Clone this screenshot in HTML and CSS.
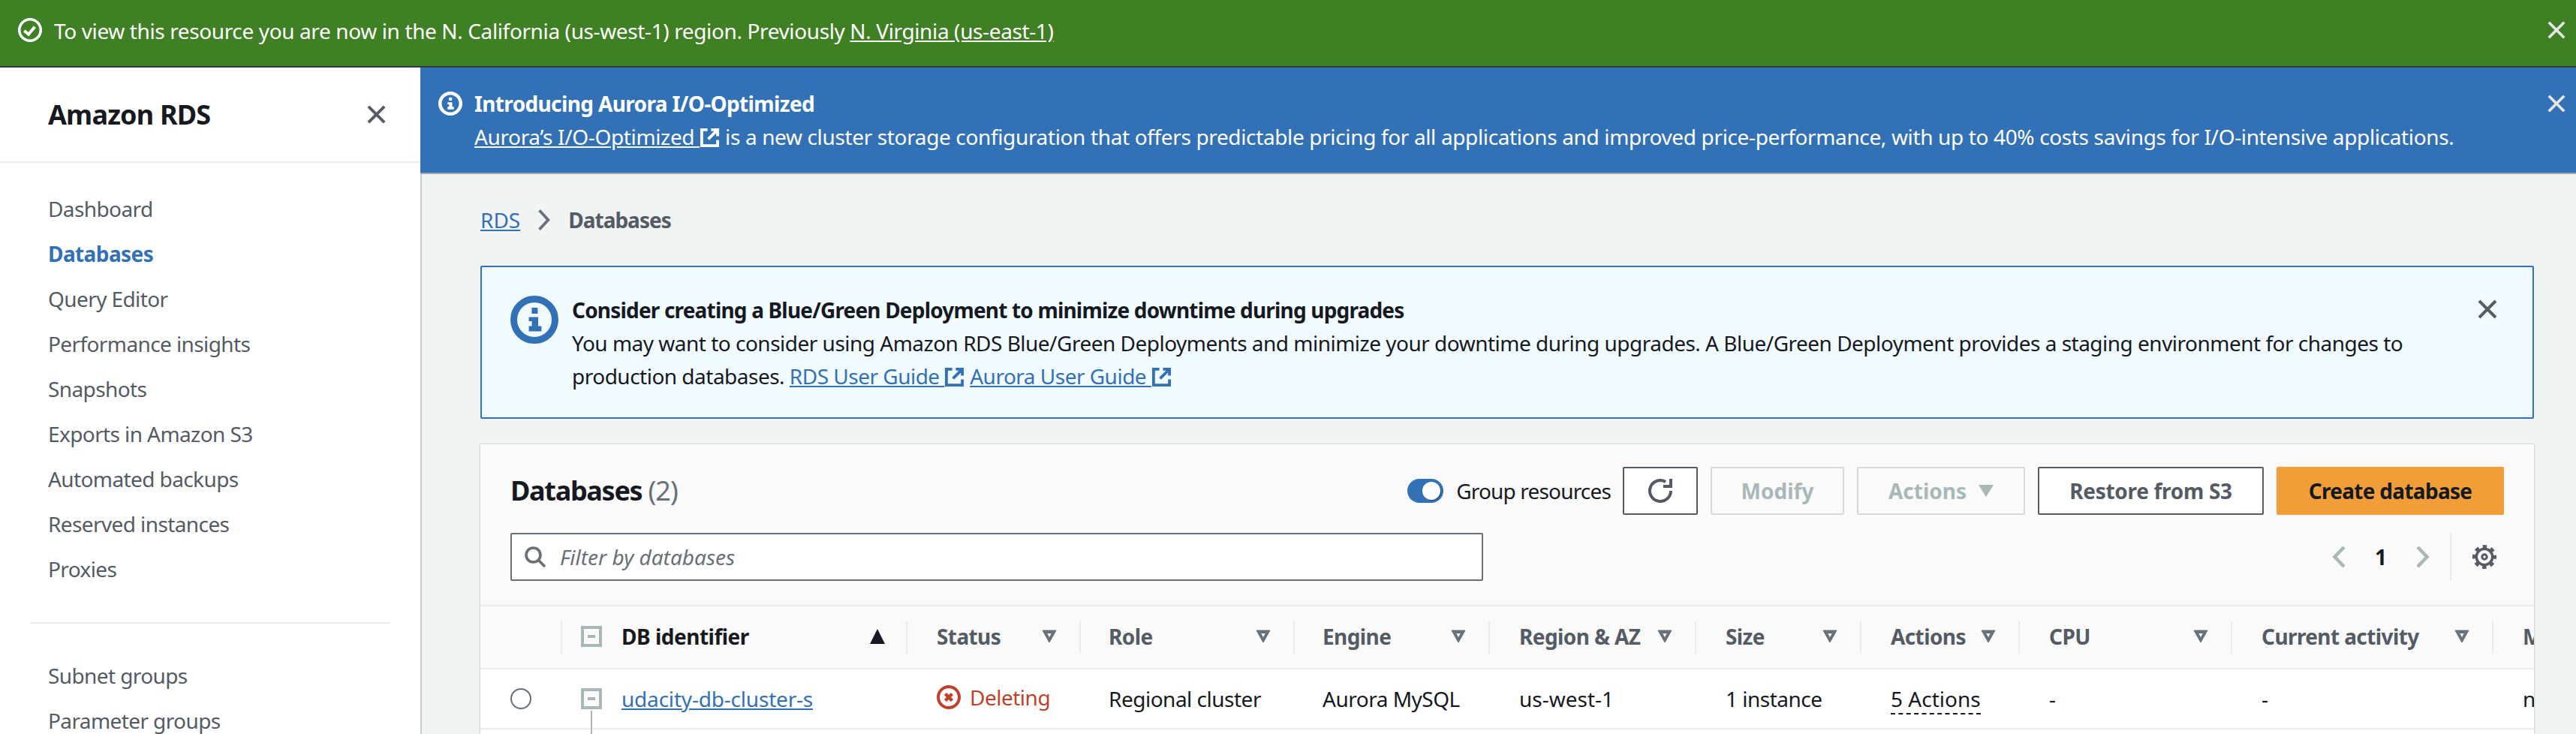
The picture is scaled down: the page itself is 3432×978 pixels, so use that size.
FILE: index.html
```html
<!DOCTYPE html>
<html lang="en">
<head>
<meta charset="utf-8">
<title>Amazon RDS - Databases</title>
<link rel="stylesheet" href="styles.css">
</head>
<body>
<svg class="defs" width="0" height="0" aria-hidden="true">
  <symbol id="x" viewBox="0 0 28 28"><path d="M3 3 25 25M25 3 3 25" fill="none" stroke="currentColor" stroke-width="4"/></symbol>
  <symbol id="ext" viewBox="0 0 28 28"><path d="M11 3H3V25H25V17M16 3H25V12M25 3 12 16" fill="none" stroke="currentColor" stroke-width="4"/></symbol>
  <symbol id="info" viewBox="0 0 32 32"><circle cx="16" cy="16" r="13.750" fill="none" stroke="currentColor" stroke-width="4.500"/><path d="M14.200 8h4v4h-4zM12.300 14.300H18.500V20.200H20.700V23.800H12.300V20.200H14.300V17H12.300Z" fill="currentColor"/></symbol>
  <symbol id="filter" viewBox="0 0 20 20"><path fill-rule="evenodd" d="M1 2H19L10 18ZM6.500 5.500H13.500L10 12Z" fill="currentColor" stroke="currentColor" stroke-width="1" stroke-linejoin="round"/></symbol>
  <symbol id="tree" viewBox="0 0 28 28"><path d="M0 0H28V28H0Z" fill="#aab7b8"/><path d="M4 4H24V24H4Z" fill="#fafafa"/><path d="M9 12H19V16H9Z" fill="#aab7b8"/></symbol>
</svg>

<div class="flash">
  <svg class="flash-icon" viewBox="0 0 32 32"><circle cx="16" cy="16" r="14.250" fill="none" stroke="currentColor" stroke-width="3.500"/><path d="M8.300 17 14 21.700 22.300 11.700" fill="none" stroke="currentColor" stroke-width="4"/></svg>
  <span class="flash-text">To view this resource you are now in the N. California (us-west-1) region. Previously <a href="#" class="inherit-link">N. Virginia (us-east-1)</a></span>
  <svg class="flash-close"><use href="#x"/></svg>
</div>

<div class="shell">
  <nav class="sidebar">
    <div class="side-head">
      <span class="side-title">Amazon RDS</span>
      <svg class="side-close"><use href="#x"/></svg>
    </div>
    <ul class="side-list">
      <li>Dashboard</li>
      <li class="active">Databases</li>
      <li>Query Editor</li>
      <li>Performance insights</li>
      <li>Snapshots</li>
      <li>Exports in Amazon S3</li>
      <li>Automated backups</li>
      <li>Reserved instances</li>
      <li>Proxies</li>
    </ul>
    <div class="side-rule"></div>
    <ul class="side-list">
      <li>Subnet groups</li>
      <li>Parameter groups</li>
    </ul>
  </nav>

  <main class="content">
    <div class="promo">
      <svg class="promo-icon"><use href="#info"/></svg>
      <div class="promo-body">
        <div class="promo-title">Introducing Aurora I/O-Optimized</div>
        <div><a href="#" class="inherit-link">Aurora’s I/O-Optimized <svg class="ext"><use href="#ext"/></svg></a> is a new cluster storage configuration that offers predictable pricing for all applications and improved price-performance, with up to 40% costs savings for I/O-intensive applications.</div>
      </div>
      <svg class="promo-close"><use href="#x"/></svg>
    </div>

    <div class="page">
      <div class="crumbs">
        <a href="#" class="link">RDS</a>
        <svg class="crumb-sep" viewBox="0 0 16 28"><path d="M2 2 13 14 2 26" fill="none" stroke="currentColor" stroke-width="3.500"/></svg>
        <span class="crumb-cur">Databases</span>
      </div>

      <div class="notice">
        <svg class="notice-icon"><use href="#info"/></svg>
        <div class="notice-body">
          <div class="notice-title">Consider creating a Blue/Green Deployment to minimize downtime during upgrades</div>
          <div>You may want to consider using Amazon RDS Blue/Green Deployments and minimize your downtime during upgrades. A Blue/Green Deployment provides a staging environment for changes to production databases. <a href="#" class="link">RDS User Guide <svg class="ext"><use href="#ext"/></svg></a> <a href="#" class="link">Aurora User Guide <svg class="ext"><use href="#ext"/></svg></a></div>
        </div>
        <svg class="notice-close"><use href="#x"/></svg>
      </div>

      <section class="panel">
        <div class="panel-head">
          <div class="head-row">
            <h1 class="panel-title">Databases <span class="count">(2)</span></h1>
            <div class="toolbar">
              <span class="toggle"></span>
              <span class="toggle-label">Group resources</span>
              <button class="btn btn-icon"><svg class="refresh" viewBox="0 0 32 32"><path d="M23 3.900A14 14 0 1 0 30 16" fill="none" stroke="currentColor" stroke-width="4"/><path d="M30 0V10H20" fill="none" stroke="currentColor" stroke-width="4"/></svg></button>
              <button class="btn btn-dis btn-modify">Modify</button>
              <button class="btn btn-dis btn-actions">Actions <svg class="caret" viewBox="0 0 20 20"><path d="M0 2H20L10 18Z" fill="currentColor"/></svg></button>
              <button class="btn btn-restore">Restore from S3</button>
              <button class="btn btn-primary">Create database</button>
            </div>
          </div>
          <div class="filter-row">
            <div class="search">
              <svg class="search-icon" viewBox="0 0 30 30"><circle cx="12.500" cy="12.500" r="9.500" fill="none" stroke="currentColor" stroke-width="3.600"/><path d="M19 19 28 28" fill="none" stroke="currentColor" stroke-width="3.600"/></svg>
              <span class="placeholder">Filter by databases</span>
            </div>
            <div class="pager">
              <svg class="page-arrow" viewBox="0 0 18 30"><path d="M16 2 3.500 15 16 28" fill="none" stroke="currentColor" stroke-width="4.500"/></svg>
              <span class="page-num">1</span>
              <svg class="page-arrow" viewBox="0 0 18 30"><path d="M2 2 14.500 15 2 28" fill="none" stroke="currentColor" stroke-width="4.500"/></svg>
              <span class="pager-sep"></span>
              <svg class="gear" viewBox="0 0 32 32"><circle cx="16" cy="16" r="10.750" fill="none" stroke="currentColor" stroke-width="3.500"/><circle cx="16" cy="16" r="13.750" fill="none" stroke="currentColor" stroke-width="4.500" stroke-dasharray="5.400 5.400" stroke-dashoffset="2.700"/><circle cx="16" cy="16" r="3.250" fill="none" stroke="currentColor" stroke-width="3"/></svg>
            </div>
          </div>
        </div>

        <div class="table-wrap">
          <table class="db-table">
            <colgroup>
              <col class="c-sel"><col class="c-id"><col class="c-status"><col class="c-role"><col class="c-engine"><col class="c-region"><col class="c-size"><col class="c-actions"><col class="c-cpu"><col class="c-activity"><col class="c-more">
            </colgroup>
            <thead>
              <tr>
                <th></th>
                <th class="sep"><div class="th-in th-id"><svg class="tree"><use href="#tree"/></svg><span class="th-strong">DB identifier</span><svg class="sort-up" viewBox="0 0 20 20"><path d="M10 0 20 20H0Z" fill="currentColor"/></svg></div></th>
                <th class="sep"><div class="th-in">Status<svg class="sort"><use href="#filter"/></svg></div></th>
                <th class="sep nudge"><div class="th-in">Role<svg class="sort"><use href="#filter"/></svg></div></th>
                <th class="sep nudge"><div class="th-in">Engine<svg class="sort"><use href="#filter"/></svg></div></th>
                <th class="sep"><div class="th-in">Region &amp; AZ<svg class="sort"><use href="#filter"/></svg></div></th>
                <th class="sep"><div class="th-in">Size<svg class="sort"><use href="#filter"/></svg></div></th>
                <th class="sep"><div class="th-in">Actions<svg class="sort"><use href="#filter"/></svg></div></th>
                <th class="sep"><div class="th-in">CPU<svg class="sort"><use href="#filter"/></svg></div></th>
                <th class="sep"><div class="th-in">Current activity<svg class="sort"><use href="#filter"/></svg></div></th>
                <th class="sep"><div class="th-in">Maintenance</div></th>
              </tr>
            </thead>
            <tbody>
              <tr>
                <td class="td-radio"><span class="radio"></span></td>
                <td class="td-id"><div class="id-cell"><svg class="tree"><use href="#tree"/></svg><a href="#" class="link">udacity-db-cluster-s</a></div><span class="tree-line"></span></td>
                <td><span class="status"><svg class="status-icon" viewBox="0 0 32 32"><circle cx="16" cy="16" r="14" fill="none" stroke="currentColor" stroke-width="4"/><path d="M11.500 11.500 20.500 20.500M20.500 11.500 11.500 20.500" fill="none" stroke="currentColor" stroke-width="4.500"/></svg>Deleting</span></td>
                <td class="nudge">Regional cluster</td>
                <td class="nudge">Aurora MySQL</td>
                <td class="plain">us-west-1</td>
                <td>1 instance</td>
                <td><span class="dotted">5 Actions</span></td>
                <td>-</td>
                <td>-</td>
                <td>none</td>
              </tr>
            </tbody>
          </table>
        </div>
      </section>
    </div>
  </main>
</div>
</body>
</html>
```
FILE: styles.css
```css
* { box-sizing: border-box; }
html, body { margin: 0; height: 978px; overflow: hidden; }
body {
  font-family: "Noto Sans", "Liberation Sans", sans-serif;
  font-size: 28px;
  line-height: 44px;
  color: #16191f;
  background: #f2f3f3;
}
.defs { position: absolute; }
ul { list-style: none; margin: 0; padding: 0; }
a.link { color: #3371b7; text-decoration: underline; }
a.inherit-link { color: inherit; text-decoration: underline; }
.ext { width: 27px; height: 27px; vertical-align: -4px; }

.flash {
  height: 90px;
  flex: none;
  display: flex;
  align-items: center;
  padding: 0 13px 6px 24px;
  background: #3f8024;
  border-bottom: 2px solid #2e3b45;
  color: #fff;
  letter-spacing: -0.38px;
}
.flash-icon { width: 32px; height: 32px; flex: none; margin: -2px 16px 0 0; }
.flash-text { flex: 1; }
.flash-close { width: 26px; height: 26px; margin-top: -2px; color: #e4e7e4; }

.shell { display: flex; height: 888px; }

.sidebar {
  width: 562px;
  flex: none;
  background: #fff;
  border-right: 2px solid #c8cccc;
}
.side-head {
  height: 127px;
  display: flex;
  align-items: center;
  justify-content: space-between;
  padding: 0 45px 0 64px;
  border-bottom: 2px solid #eaeded;
}
.side-title { font-size: 36px; font-weight: 700; letter-spacing: -0.8px; }
.side-close { width: 27px; height: 27px; color: #545b64; }
.side-list { padding: 31px 0 0 64px; letter-spacing: -0.6px; }
.side-list li { height: 60px; line-height: 60px; color: #545b64; }
.side-list li.active { color: #3371b7; font-weight: 700; }
.side-rule { height: 2px; background: #eaeded; margin: 41px 40px 0; }
.side-rule + .side-list { padding-top: 39px; }

.content { flex: 1; min-width: 0; display: flex; flex-direction: column; }

.promo {
  height: 142px;
  flex: none;
  display: flex;
  background: #3371b7;
  color: #fff;
  padding: 26px 13px 0 24px;
  border-bottom: 2px solid #a0a8b2;
  margin-left: -2px;
  letter-spacing: -0.36px;
}
.promo-icon { width: 32px; height: 32px; flex: none; margin: 6px 16px 0 0; }
.promo-body { flex: 1; }
.promo-title { font-weight: 700; letter-spacing: -0.64px; }
.promo-close { width: 26px; height: 26px; margin-top: 9px; color: #e4e7e4; }

.page { padding: 0 56px 0 78px; }
.crumbs { height: 122px; display: flex; align-items: center; gap: 23px; }
.crumb-sep { width: 18px; height: 30px; color: #687078; }
.crumb-cur { color: #545b64; font-weight: 700; letter-spacing: -1px; }

.notice {
  height: 204px;
  display: flex;
  background: #f1faff;
  border: 2px solid #3371b7;
  border-radius: 2px;
  padding: 35px 46px 0 38px;
  letter-spacing: -0.51px;
}
.notice-icon { width: 64px; height: 64px; flex: none; color: #3371b7; margin: 3px 18px 0 0; }
.notice-body { flex: 1; max-width: 2500px; }
.notice-title { font-weight: 700; letter-spacing: -0.82px; }
.notice-close { width: 28px; height: 28px; margin: 7px 0 0 auto; color: #545b64; }

.panel {
  margin-top: 34px;
  background: #fff;
  box-shadow: 0 0 2px rgba(0, 28, 36, .35);
  overflow: hidden;
}
.panel-head { background: #fafafa; padding: 30px 40px 0; height: 214px; }
.head-row { display: flex; align-items: center; justify-content: space-between; height: 64px; }
.panel-title { margin: 0; font-size: 36px; font-weight: 700; line-height: 64px; letter-spacing: -1.3px; }
.count { font-weight: 400; color: #687078; letter-spacing: -0.9px; }
.toolbar { display: flex; align-items: center; gap: 17px; }
.toggle {
  width: 48px;
  height: 32px;
  border-radius: 16px;
  background: #3371b7;
  position: relative;
}
.toggle::after {
  content: "";
  position: absolute;
  right: 4px;
  top: 4px;
  width: 24px;
  height: 24px;
  border-radius: 50%;
  background: #fff;
  box-shadow: 1px 1px 0 #1f4a80;
}
.toggle-label { color: #16191f; letter-spacing: -0.83px; margin-right: -1px; }
.btn {
  height: 64px;
  padding: 0;
  font: 700 28px/1 "Noto Sans", sans-serif;
  background: #fff;
  border: 2px solid #545b64;
  border-radius: 2px;
  color: #545b64;
  display: inline-flex;
  align-items: center;
  justify-content: center;
}
.btn-icon { width: 100px; }
.refresh { width: 32px; height: 32px; }
.btn-dis { background: #fafafa; border-color: #d5dbdb; color: #aab7b8; }
.btn-modify { width: 178px; }
.btn-actions { width: 224px; gap: 16px; }
.caret { width: 20px; height: 20px; }
.btn-restore { width: 301px; letter-spacing: -0.3px; }
.btn-primary { width: 303px; background: #f29e38; border-color: #f29e38; color: #16191f; letter-spacing: -0.7px; }

.filter-row { display: flex; justify-content: space-between; margin-top: 24px; }
.search {
  width: 1296px;
  height: 64px;
  display: flex;
  align-items: center;
  background: #fff;
  border: 2px solid #687078;
  border-radius: 2px;
  padding-left: 16px;
  gap: 18px;
}
.search-icon { width: 30px; height: 30px; color: #687078; }
.placeholder { font-style: italic; color: #687078; }
.pager { display: flex; align-items: center; height: 64px; padding-right: 10px; }
.page-arrow { width: 18px; height: 30px; color: #aab7b8; }
.page-num { width: 94px; text-align: center; font-weight: 700; }
.pager-sep { width: 2px; height: 64px; background: #eaeded; margin: 0 28px 0 27px; }
.gear { width: 32px; height: 32px; color: #545b64; }

.table-wrap { overflow: hidden; position: relative; background: #fff; height: 180px; }
.db-table { table-layout: fixed; width: 3059px; border-collapse: collapse; }
.c-sel { width: 107px; }
.c-id { width: 460px; }
.c-status { width: 231px; }
.c-role { width: 285px; }
.c-engine { width: 260px; }
.c-region { width: 275px; }
.c-size { width: 220px; }
.c-actions { width: 211px; }
.c-cpu { width: 283px; }
.c-activity { width: 348px; }
.c-more { width: 379px; }
th {
  height: 84px;
  padding: 0;
  background: #fafafa;
  border-top: 2px solid #eaeded;
  border-bottom: 2px solid #eaeded;
  color: #545b64;
  font-weight: 700;
  text-align: left;
  white-space: nowrap;
  letter-spacing: -0.6px;
}
th.sep .th-in {
  height: 44px;
  border-left: 2px solid #eaeded;
  padding: 0 30px 2px 39px;
  display: flex;
  align-items: center;
  justify-content: space-between;
}
th.nudge .th-in { padding-left: 37px; }
.th-id { justify-content: flex-start; }
th.sep .th-id { padding-left: 25px; padding-right: 28px; }
.th-strong { color: #16191f; flex: 1; margin-left: 26px; letter-spacing: -0.5px; }
.tree { width: 28px; height: 28px; flex: none; display: block; }
.sort { width: 20px; height: 20px; color: #687078; flex: none; }
.sort-up { width: 20px; height: 20px; color: #16191f; flex: none; }
td {
  height: 80px;
  padding: 0 0 0 41px;
  border-bottom: 2px solid #eaeded;
  white-space: nowrap;
  overflow: hidden;
  letter-spacing: -0.5px;
}
td.nudge { padding-left: 39px; }
td.plain { letter-spacing: 0; }
.td-radio { padding-left: 40px; }
.radio {
  display: block;
  width: 28px;
  height: 28px;
  border: 2px solid #687078;
  border-radius: 50%;
}
td.td-id { padding-left: 27px; position: relative; overflow: visible; letter-spacing: -0.2px; }
.id-cell { display: flex; align-items: center; gap: 26px; }
.tree-line {
  position: absolute;
  left: 40px;
  top: 55px;
  height: 200px;
  width: 2px;
  background: #aab7b8;
}
.status { display: inline-flex; align-items: center; gap: 12px; color: #c0412a; }
.status-icon { width: 32px; height: 32px; }
.dotted { border-bottom: 2px dashed #16191f; display: inline-block; line-height: 38px; letter-spacing: 0; }
```
